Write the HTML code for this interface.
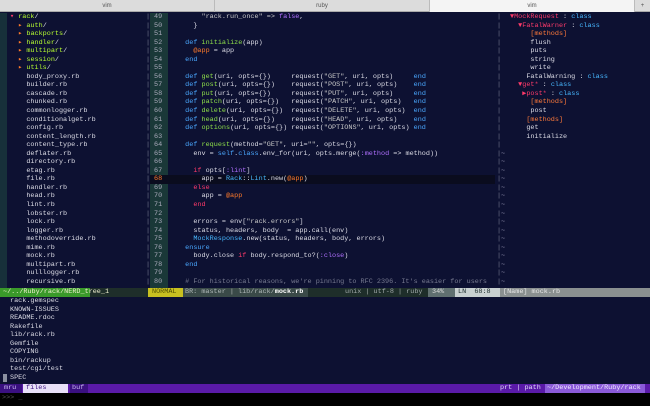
<!DOCTYPE html><html><head><style>
*{margin:0;padding:0;box-sizing:border-box}
body{width:650px;height:406px;overflow:hidden;background:#0d1132;font-family:"Liberation Mono","DejaVu Sans Mono",monospace;font-size:6.8px;color:#dcdce6;position:relative}
.tabs{position:absolute;left:0;top:0;width:650px;height:12px;background:#dcdcdc;border-bottom:1px solid #aaa;font-family:"Liberation Sans",sans-serif;font-size:6px;color:#555}
.tab{position:absolute;top:0;height:12px;line-height:12px;text-align:center;border-right:1px solid #bbb}
.p{position:absolute;white-space:pre;line-height:8.55px}
.k{color:#4aa8ff}.f{color:#8fe04a}.s{color:#c8c8c8}.o{color:#ff7a2a}.r{color:#ff3a6a}.m{color:#b070ff}.g{color:#777a90}.t{color:#ff7a3a}.cl{color:#48b8ff}
.d{color:#b8ff30}
</style></head><body>
<div class="tabs">
<div class="tab" style="left:0;width:215px">vim</div>
<div class="tab" style="left:215px;width:215px">ruby</div>
<div class="tab" style="left:430px;width:205px;background:#f4f4f4">vim</div>
<div class="tab" style="left:635px;width:15px;border:none">+</div>
</div>
<div style="position:absolute;left:0;top:13px;width:7px;height:275px;background:#17303a"></div>
<div style="position:absolute;left:150px;top:13px;width:18px;height:275px;background:#1a3838"></div>
<div style="position:absolute;left:150px;top:175px;width:345px;height:8.5px;background:#0a0c1e"></div>
<div class="p" style="left:10px;top:13px"><span class="r">▾</span> <span class="d">rack</span>/
  <span class="o">▸</span> <span class="d">auth</span>/
  <span class="o">▸</span> <span class="d">backports</span>/
  <span class="o">▸</span> <span class="d">handler</span>/
  <span class="o">▸</span> <span class="d">multipart</span>/
  <span class="o">▸</span> <span class="d">session</span>/
  <span class="o">▸</span> <span class="d">utils</span>/
    body_proxy.rb
    builder.rb
    cascade.rb
    chunked.rb
    commonlogger.rb
    conditionalget.rb
    config.rb
    content_length.rb
    content_type.rb
    deflater.rb
    directory.rb
    etag.rb
    file.rb
    handler.rb
    head.rb
    lint.rb
    lobster.rb
    lock.rb
    logger.rb
    methodoverride.rb
    mime.rb
    mock.rb
    multipart.rb
    nulllogger.rb
    recursive.rb</div>
<div class="p g" style="left:146px;top:13px">|
|
|
|
|
|
|
|
|
|
|
|
|
|
|
|
|
|
|
|
|
|
|
|
|
|
|
|
|
|
|
|</div>
<div class="p" style="left:154px;top:13px;color:#aab">49
50
51
52
53
54
55
56
57
58
59
60
61
62
63
64
65
66
67
<span class="o">68</span>
69
70
71
72
73
74
75
76
77
78
79
80</div>
<div class="p" style="left:177px;top:13px">      <span class="s">"rack.run_once" =&gt; </span><span class="m">false</span>,
    }

  <span class="k">def</span> <span class="f">initialize</span>(app)
    <span class="o">@app</span> = app
  <span class="k">end</span>

  <span class="k">def</span> <span class="f">get</span>(uri, opts={})     request(<span class="s">"GET"</span>, uri, opts)     <span class="k">end</span>
  <span class="k">def</span> <span class="f">post</span>(uri, opts={})    request(<span class="s">"POST"</span>, uri, opts)    <span class="k">end</span>
  <span class="k">def</span> <span class="f">put</span>(uri, opts={})     request(<span class="s">"PUT"</span>, uri, opts)     <span class="k">end</span>
  <span class="k">def</span> <span class="f">patch</span>(uri, opts={})   request(<span class="s">"PATCH"</span>, uri, opts)   <span class="k">end</span>
  <span class="k">def</span> <span class="f">delete</span>(uri, opts={})  request(<span class="s">"DELETE"</span>, uri, opts)  <span class="k">end</span>
  <span class="k">def</span> <span class="f">head</span>(uri, opts={})    request(<span class="s">"HEAD"</span>, uri, opts)    <span class="k">end</span>
  <span class="k">def</span> <span class="f">options</span>(uri, opts={}) request(<span class="s">"OPTIONS"</span>, uri, opts) <span class="k">end</span>

  <span class="k">def</span> <span class="f">request</span>(method=<span class="s">"GET"</span>, uri=<span class="s">""</span>, opts={})
    env = <span class="k">self</span>.<span class="k">class</span>.env_for(uri, opts.merge(<span class="m">:method</span> =&gt; method))

    <span class="r">if</span> opts[<span class="m">:lint</span>]
      app = <span class="cl">Rack</span>::<span class="cl">Lint</span>.new(<span class="o">@app</span>)
    <span class="r">else</span>
      app = <span class="o">@app</span>
    <span class="r">end</span>

    errors = env[<span class="s">"rack.errors"</span>]
    status, headers, body  = app.call(env)
    <span class="cl">MockResponse</span>.new(status, headers, body, errors)
  <span class="k">ensure</span>
    body.close <span class="r">if</span> body.respond_to?(<span class="m">:close</span>)
  <span class="k">end</span>

  <span class="g"># For historical reasons, we're pinning to RFC 2396. It's easier for users</span></div>
<div class="p g" style="left:497px;top:13px">|
|
|
|
|
|
|
|
|
|
|
|
|
|
|
|
|
|
|
|
|
|
|
|
|
|
|
|
|
|
|
|</div>
<div class="p" style="left:501px;top:13px;color:#8a8aa8">















~
~
~
~
~
~
~
~
~
~
~
~
~
~
~
~
~</div>
<div class="p" style="left:510px;top:13px"><span class="r">▼MockRequest</span> : <span class="cl">class</span>
  <span class="r">▼FatalWarner</span> : <span class="cl">class</span>
     <span class="t">[methods]</span>
     flush
     puts
     string
     write
    FatalWarning : <span class="cl">class</span>
  <span class="r">▼get*</span> : <span class="cl">class</span>
   <span class="r">▶post*</span> : <span class="cl">class</span>
     <span class="t">[methods]</span>
     post
    <span class="t">[methods]</span>
    get
    initialize</div>
<div style="position:absolute;left:0;top:288px;width:650px;height:8.5px;background:#1e2e2a"></div>
<div class="p" style="left:0;top:288px;width:90px;background:#3a9a2a;color:#f0f0d0;padding-left:3px">~/../Ruby/rack/NERD_tree_1</div>
<div class="p" style="left:148px;top:288px;width:35px;background:#c8c020;color:#505000;padding-left:4px">NORMAL</div>
<div class="p" style="left:183px;top:288px;width:125px;background:#3a4a48;color:#b0b8b8;padding-left:2px">BR: master | lib/rack/<b style="color:#fff">mock.rb</b></div>
<div class="p" style="left:345px;top:288px;color:#a0a8a8">unix | utf-8 | ruby</div>
<div class="p" style="left:428px;top:288px;width:27px;background:#607070;color:#ddd;padding-left:4px">34%</div>
<div class="p" style="left:455px;top:288px;width:45px;background:#c8d0d0;color:#203030;padding-left:3px">LN  68:8</div>
<div class="p" style="left:500px;top:288px;width:150px;background:#8a9090;color:#e8e8e8;padding-left:3px">[Name] mock.rb</div>
<div style="position:absolute;left:3px;top:374px;width:4px;height:8px;background:#8a90a0"></div>
<div class="p" style="left:10px;top:297px">rack.gemspec
KNOWN-ISSUES
README.rdoc
Rakefile
lib/rack.rb
Gemfile
COPYING
bin/rackup
test/cgi/test
SPEC</div>
<div style="position:absolute;left:0;top:384px;width:650px;height:8.5px;background:#5a1aa8"></div>
<div class="p" style="left:0;top:384px;width:22px;background:#3a1080;color:#c8b8f0;padding-left:4px">mru</div>
<div class="p" style="left:23px;top:384px;width:45px;background:#e8e0f8;color:#3a1080;padding-left:3px">files</div>
<div class="p" style="left:70px;top:384px;width:18px;background:#3a1080;color:#c8b8f0;padding-left:2px">buf</div>
<div class="p" style="left:500px;top:384px;color:#e0d8f8">prt | path</div>
<div class="p" style="left:545px;top:384px;width:100px;background:#8a5ad8;color:#f0e8ff;padding-left:2px">~/Development/Ruby/rack</div>
<div style="position:absolute;left:0;top:393px;width:650px;height:13px;background:#000"></div>
<div class="p" style="left:2px;top:394px;color:#555">&gt;&gt;&gt; _</div>
</body></html>
